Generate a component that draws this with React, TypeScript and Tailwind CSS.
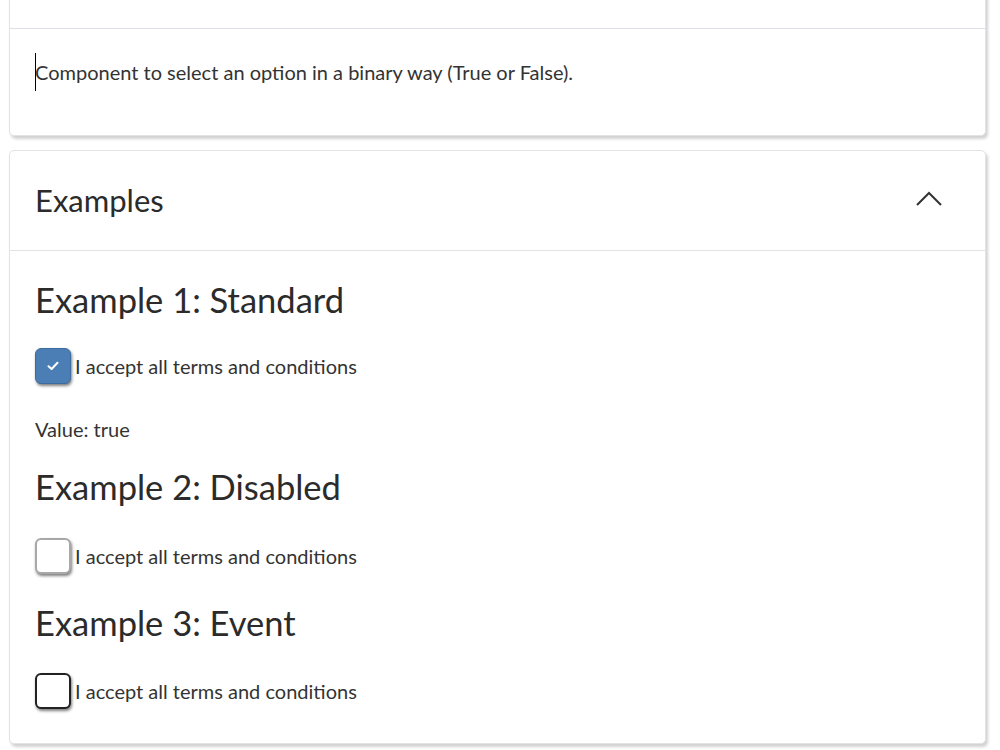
import { useState } from "react";

function Check({
  checked,
  variant,
  onChange,
}: {
  checked: boolean;
  variant: "standard" | "disabled" | "event";
  onChange?: (v: boolean) => void;
}) {
  const base =
    "w-[36px] h-[36px] rounded-[6px] flex items-center justify-center shrink-0 shadow-[1px_2px_3px_rgba(0,0,0,0.5)]";
  const look = checked
    ? "bg-[#4a7eb5] border border-[#3d6c9f]"
    : variant === "disabled"
    ? "bg-white border-2 border-[#a8a8a8]"
    : variant === "event"
    ? "bg-white border-2 border-[#222]"
    : "bg-white border-2 border-[#555]";
  return (
    <button
      className={`${base} ${look}`}
      disabled={variant === "disabled"}
      onClick={() => onChange && onChange(!checked)}
    >
      {checked && (
        <svg width="12" height="10" viewBox="0 0 12 10" fill="none">
          <path d="M1.5 5.2 L4.6 8 L10.5 1.8" stroke="white" strokeWidth="2" strokeLinecap="round" strokeLinejoin="round" />
        </svg>
      )}
    </button>
  );
}

function Row({ children }: { children: React.ReactNode }) {
  return <div className="flex items-center gap-[4px]">{children}</div>;
}

export default function App() {
  const [v1, setV1] = useState(true);
  const [v3, setV3] = useState(false);
  const label = "I accept all terms and conditions";

  return (
    <div className="w-[1000px] h-[750px] overflow-hidden bg-white text-[#333] font-['Lato',sans-serif]">
      <div className="flex flex-col pl-[9px] pr-[14px]">
        {/* description card, top cut off */}
        <div className="-mt-[30px] bg-white border border-[#e3e3e3] rounded-[5px] shadow-[2px_3px_3px_rgba(0,0,0,0.18)]">
          <div className="h-[58px] border-b border-[#dde1e7]" />
          <div className="h-[106px] pl-[25px] pt-[24px]">
            <p className="text-[20px] leading-[36px] flex items-center">
              <span className="inline-block w-px h-[38px] bg-black -mr-px" />
              Component to select an option in a binary way (True or False).
            </p>
          </div>
        </div>

        {/* examples card */}
        <div className="mt-[14px] bg-white border border-[#e3e3e3] rounded-[5px] shadow-[2px_3px_3px_rgba(0,0,0,0.18)]">
          <div className="h-[100px] flex items-center justify-between pl-[25px] pr-[42px] border-b border-[#e3e3e3]">
            <h3 className="text-[31px] text-[#2b2b2b]">Examples</h3>
            <svg width="28" height="18" viewBox="0 0 28 18" fill="none" className="mt-[-4px]">
              <path d="M2 15 L14 3 L26 15" stroke="#333" strokeWidth="2" />
            </svg>
          </div>

          <div className="pl-[25px] pt-[29px] pb-[34px] flex flex-col">
            <h2 className="text-[34.5px] leading-[40px] text-[#2b2b2b]">Example 1: Standard</h2>
            <div className="mt-[28px]">
              <Row>
                <Check checked={v1} variant="standard" onChange={setV1} />
                <span className="text-[20px]">{label}</span>
              </Row>
            </div>
            <p className="mt-[33px] text-[20px] leading-[24px]">Value: {String(v1)}</p>

            <h2 className="mt-[26px] text-[34.5px] leading-[40px] text-[#2b2b2b]">Example 2: Disabled</h2>
            <div className="mt-[31px]">
              <Row>
                <Check checked={false} variant="disabled" />
                <span className="text-[20px]">{label}</span>
              </Row>
            </div>

            <h2 className="mt-[29px] text-[34.5px] leading-[40px] text-[#2b2b2b]">Example 3: Event</h2>
            <div className="mt-[30px]">
              <Row>
                <Check checked={v3} variant="event" onChange={setV3} />
                <span className="text-[20px]">{label}</span>
              </Row>
            </div>
          </div>
        </div>
      </div>
    </div>
  );
}
